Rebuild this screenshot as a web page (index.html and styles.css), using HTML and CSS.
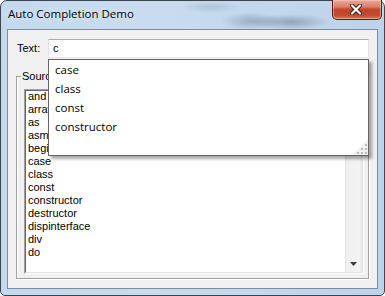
FILE: index.html
```html
<!DOCTYPE html>
<html>
<head>
<meta charset="utf-8">
<link rel="stylesheet" href="styles.css">
</head>
<body>
<div class="window">
  <div class="titlebar">
    <div class="title">Auto Completion Demo</div>
    <div class="close">
      <svg width="12" height="11" viewBox="0 0 12 11">
        <path d="M2 1.5 L10 9.5 M10 1.5 L2 9.5" stroke="#3b1a14" stroke-width="4" stroke-linecap="round" fill="none"/>
        <path d="M2 1.5 L10 9.5 M10 1.5 L2 9.5" stroke="#ffffff" stroke-width="2.2" stroke-linecap="round" fill="none"/>
      </svg>
    </div>
  </div>
  <div class="client">
    <div class="text-row">
      <span class="label">Text:</span>
      <div class="edit">
        <span class="edit-text">c</span>
        <div class="popup">
          <div class="pitem">case</div>
          <div class="pitem">class</div>
          <div class="pitem">const</div>
          <div class="pitem">constructor</div>
          <svg class="grip" width="16" height="16" viewBox="0 0 16 16">
            <path d="M16 0 L16 16 L0 16 Z" fill="#f1f1f1"/>
            <rect x="13" y="5" width="2" height="2" fill="#b9b9b9"/>
            <rect x="9" y="9" width="2" height="2" fill="#b9b9b9"/>
            <rect x="13" y="9" width="2" height="2" fill="#b9b9b9"/>
            <rect x="5" y="13" width="2" height="2" fill="#b9b9b9"/>
            <rect x="9" y="13" width="2" height="2" fill="#b9b9b9"/>
            <rect x="13" y="13" width="2" height="2" fill="#b9b9b9"/>
          </svg>
        </div>
      </div>
    </div>
    <div class="group">
      <span class="legend">Source</span>
      <div class="listbox">
        <div class="listbox-inner">
          <div class="items">
            <div>and</div>
            <div>array</div>
            <div>as</div>
            <div>asm</div>
            <div>begin</div>
            <div>case</div>
            <div>class</div>
            <div>const</div>
            <div>constructor</div>
            <div>destructor</div>
            <div>dispinterface</div>
            <div>div</div>
            <div>do</div>
          </div>
          <div class="scrollbar">
            <div class="track"></div>
            <div class="sbtn">
              <svg width="7" height="4" viewBox="0 0 7 4"><path d="M0 0 L7 0 L3.5 4 Z" fill="#3c3c3c"/></svg>
            </div>
          </div>
        </div>
      </div>
    </div>
  </div>
</div>
</body>
</html>
```
FILE: styles.css
```css
html, body {
  margin: 0;
  padding: 0;
  background: #ffffff;
}
body {
  width: 385px;
  height: 296px;
  overflow: hidden;
}
.window {
  box-sizing: border-box;
  width: 385px;
  height: 296px;
  border: 1px solid #3a4552;
  border-radius: 7px 7px 5px 5px;
  padding: 0 6px 6px 6px;
  display: flex;
  flex-direction: column;
  background:
    radial-gradient(ellipse 30px 9px at 250px 20px, rgba(80,100,120,0.35), rgba(80,100,120,0)),
    radial-gradient(ellipse 40px 8px at 290px 21px, rgba(70,90,110,0.4), rgba(70,90,110,0)),
    radial-gradient(ellipse 30px 6px at 210px 6px, rgba(110,130,150,0.25), rgba(110,130,150,0)),
    linear-gradient(to right, #c4d9ee 0%, #c9dcef 40%, #bdd3ea 100%);
}
.titlebar {
  height: 28px;
  display: flex;
  justify-content: space-between;
  align-items: flex-start;
}
.title {
  font-family: "Open Sans", "Noto Sans", sans-serif;
  font-size: 11.5px;
  line-height: 16px;
  padding-top: 5px;
  padding-left: 1px;
  color: #000;
  text-shadow: 0 0 6px rgba(255,255,255,0.9);
}
.close {
  box-sizing: border-box;
  width: 50px;
  height: 20px;
  margin-top: -1px;
  margin-right: -4px;
  border: 1px solid #5a1c12;
  border-top: none;
  border-radius: 0 0 5px 5px;
  background: linear-gradient(to bottom, #e8a899 0%, #d9806b 35%, #c2452d 50%, #c24a30 80%, #d47a5a 100%);
  box-shadow: inset 0 0 0 1px rgba(255,220,210,0.45);
  display: flex;
  align-items: center;
  justify-content: center;
}
.close svg {
  display: block;
  margin-left: -2px;
}
.client {
  flex: 1;
  border: 1px solid #7d8c9e;
  background: #f0f0f0;
  padding: 9px 8px 0 8px;
  display: flex;
  flex-direction: column;
  font-family: "Liberation Sans", Arial, sans-serif;
  font-size: 11px;
  color: #000;
}
.text-row {
  display: flex;
  align-items: center;
  padding-left: 1px;
}
.label {
  width: 31px;
  line-height: 13px;
}
.edit {
  flex: 1;
  position: relative;
  box-sizing: border-box;
  height: 19px;
  background: #fff;
  border: 1px solid;
  border-color: #abadb3 #e2e3ea #e3e9ef #e2e3ea;
  display: flex;
  align-items: center;
  padding-left: 4px;
}
.edit-text {
  line-height: 13px;
}
.popup {
  position: absolute;
  left: -1px;
  top: 19px;
  box-sizing: border-box;
  width: calc(100% + 2px);
  height: 97px;
  background: #fff;
  border: 1px solid #646464;
  box-shadow: 3px 3px 3px rgba(0,0,0,0.35);
  font-family: "Open Sans", "Noto Sans", sans-serif;
  font-size: 11.5px;
  color: #000;
  z-index: 2;
}
.pitem {
  line-height: 19px;
  height: 19px;
  padding-left: 6px;
}
.grip {
  position: absolute;
  right: 0;
  bottom: 0;
  display: block;
}
.group {
  margin-top: 18px;
  height: 203px;
  box-sizing: border-box;
  border: 1px solid #a0a0a0;
  box-shadow: inset 1px 1px 0 #fff, 1px 1px 0 #fff;
  display: flex;
  flex-direction: column;
  padding: 0 4px 4px 7px;
}
.legend {
  align-self: flex-start;
  margin-top: -7px;
  margin-left: -3px;
  padding: 0 1px;
  line-height: 13px;
  background: #f0f0f0;
}
.listbox {
  flex: 1;
  margin-top: 6px;
  border: 1px solid;
  border-color: #a0a0a0 #fff #fff #a0a0a0;
  display: flex;
}
.listbox-inner {
  flex: 1;
  border: 1px solid;
  border-color: #696969 #e3e3e3 #e3e3e3 #696969;
  background: #fff;
  display: flex;
}
.items {
  flex: 1;
  padding-left: 2px;
  margin-top: -1px;
  line-height: 13px;
}
.scrollbar {
  width: 17px;
  display: flex;
  flex-direction: column;
  background: linear-gradient(to right, #e3e3e3 0, #e3e3e3 1px, #f0f0f0 1px, #f3f3f3 15px, #e6e6e6 16px, #e6e6e6 17px);
}
.track {
  flex: 1;
}
.sbtn {
  height: 17px;
  display: flex;
  align-items: center;
  justify-content: center;
}
.sbtn svg {
  display: block;
}
```
